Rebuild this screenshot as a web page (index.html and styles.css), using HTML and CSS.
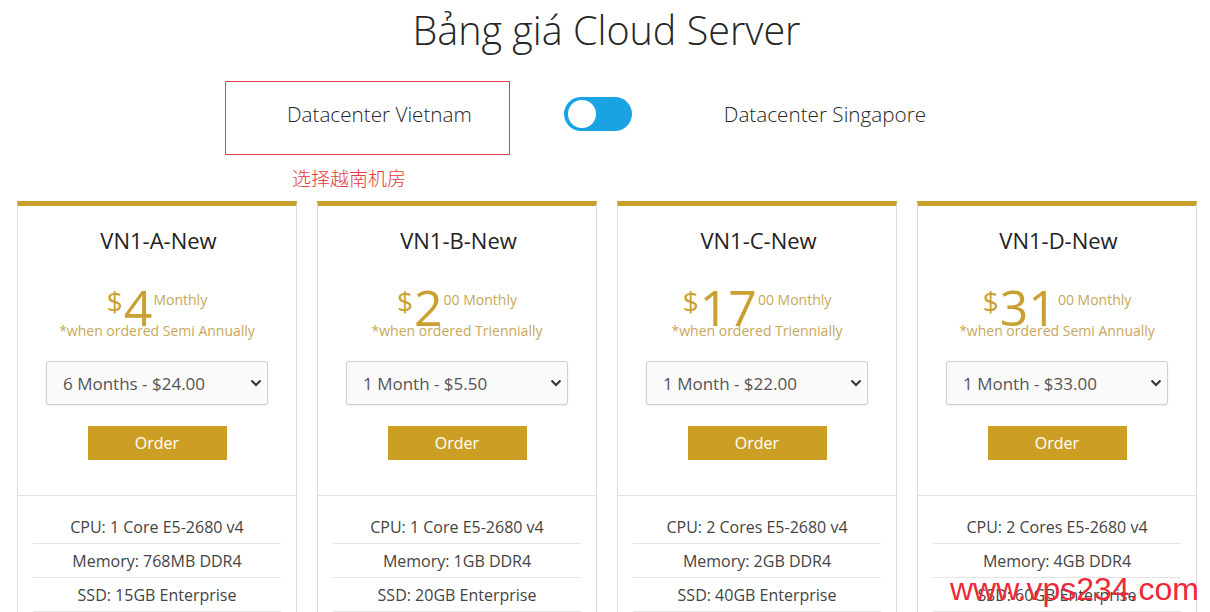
FILE: index.html
```html
<!DOCTYPE html>
<html lang="vi">
<head>
<meta charset="utf-8">
<title>Bảng giá Cloud Server</title>
<link rel="stylesheet" href="styles.css">
</head>
<body>
<div class="page">
  <h1 class="title">Bảng giá Cloud Server</h1>

  <div class="switcher">
    <div class="dc-label dc-active">
      <span>Datacenter Vietnam</span>
      <span class="mark-box"></span>
      <span class="mark-note">选择越南机房</span>
    </div>
    <div class="toggle"><span class="knob"></span></div>
    <div class="dc-label">Datacenter Singapore</div>
  </div>

  <div class="plans">
    <div class="card">
      <div class="card-head">
        <div class="plan-name">VN1-A-New</div>
        <div class="price"><span class="cur">$</span><span class="big">4</span><span class="per">Monthly</span></div>
        <div class="cycle">*when ordered Semi Annually</div>
        <div class="select-wrap">
          <select class="cycle-select"><option>6 Months - $24.00</option></select>
          <svg class="chev" width="12" height="8" viewBox="0 0 12 8"><path d="M1.5 1.5 L6 6 L10.5 1.5" fill="none" stroke="#333" stroke-width="2"/></svg>
        </div>
        <button class="order">Order</button>
      </div>
      <ul class="features">
        <li>CPU: 1 Core E5-2680 v4</li>
        <li>Memory: 768MB DDR4</li>
        <li>SSD: 15GB Enterprise</li>
      </ul>
    </div>

    <div class="card">
      <div class="card-head">
        <div class="plan-name">VN1-B-New</div>
        <div class="price"><span class="cur">$</span><span class="big">2</span><span class="per">00 Monthly</span></div>
        <div class="cycle">*when ordered Triennially</div>
        <div class="select-wrap">
          <select class="cycle-select"><option>1 Month - $5.50</option></select>
          <svg class="chev" width="12" height="8" viewBox="0 0 12 8"><path d="M1.5 1.5 L6 6 L10.5 1.5" fill="none" stroke="#333" stroke-width="2"/></svg>
        </div>
        <button class="order">Order</button>
      </div>
      <ul class="features">
        <li>CPU: 1 Core E5-2680 v4</li>
        <li>Memory: 1GB DDR4</li>
        <li>SSD: 20GB Enterprise</li>
      </ul>
    </div>

    <div class="card">
      <div class="card-head">
        <div class="plan-name">VN1-C-New</div>
        <div class="price"><span class="cur">$</span><span class="big">17</span><span class="per">00 Monthly</span></div>
        <div class="cycle">*when ordered Triennially</div>
        <div class="select-wrap">
          <select class="cycle-select"><option>1 Month - $22.00</option></select>
          <svg class="chev" width="12" height="8" viewBox="0 0 12 8"><path d="M1.5 1.5 L6 6 L10.5 1.5" fill="none" stroke="#333" stroke-width="2"/></svg>
        </div>
        <button class="order">Order</button>
      </div>
      <ul class="features">
        <li>CPU: 2 Cores E5-2680 v4</li>
        <li>Memory: 2GB DDR4</li>
        <li>SSD: 40GB Enterprise</li>
      </ul>
    </div>

    <div class="card">
      <div class="card-head">
        <div class="plan-name">VN1-D-New</div>
        <div class="price"><span class="cur">$</span><span class="big">31</span><span class="per">00 Monthly</span></div>
        <div class="cycle">*when ordered Semi Annually</div>
        <div class="select-wrap">
          <select class="cycle-select"><option>1 Month - $33.00</option></select>
          <svg class="chev" width="12" height="8" viewBox="0 0 12 8"><path d="M1.5 1.5 L6 6 L10.5 1.5" fill="none" stroke="#333" stroke-width="2"/></svg>
        </div>
        <button class="order">Order</button>
      </div>
      <ul class="features">
        <li>CPU: 2 Cores E5-2680 v4</li>
        <li>Memory: 4GB DDR4</li>
        <li>SSD: 60GB Enterprise</li>
      </ul>
    </div>
  </div>

  <div class="watermark">www.vps234.com</div>
</div>
</body>
</html>
```

FILE: styles.css
```css
* { box-sizing: border-box; }

html, body {
  margin: 0;
  padding: 0;
  background: #fff;
}

body {
  font-family: "Open Sans", "Noto Sans", sans-serif;
  color: #333;
  overflow: hidden;
}

.page {
  position: relative;
  width: 1210px;
  height: 612px;
  overflow: hidden;
}

.title {
  margin: 5px 0 0;
  padding-left: 3px;
  font-size: 39.5px;
  line-height: 50px;
  font-weight: 300;
  text-align: center;
  color: #262626;
}

.switcher {
  margin-top: 42px;
  padding-left: 3px;
  display: flex;
  justify-content: center;
  align-items: center;
  gap: 92px;
  height: 34px;
}

.dc-label {
  position: relative;
  font-size: 20.7px;
  font-weight: 300;
  line-height: 28px;
  color: #262626;
  white-space: nowrap;
}

.mark-box {
  position: absolute;
  left: -62px;
  top: -19px;
  width: 285px;
  height: 74px;
  border: 1px solid #e0454b;
}

.mark-note {
  position: absolute;
  left: 5px;
  top: 66px;
  font-family: "Noto Sans CJK SC", sans-serif;
  font-size: 19px;
  line-height: 24px;
  color: #e23b40;
  white-space: nowrap;
}

.toggle {
  width: 68px;
  height: 34px;
  border-radius: 17px;
  background: #1aa3e3;
  padding: 3px 4px;
  display: flex;
  align-items: center;
}

.knob {
  width: 28px;
  height: 28px;
  border-radius: 50%;
  background: #fff;
}

.plans {
  margin: 70px 0 0 17px;
  width: 1180px;
  display: grid;
  grid-template-columns: repeat(4, 1fr);
  gap: 20px;
}

.card {
  border: 1px solid #dcdcdc;
  border-top: 5px solid #c9a02c;
  height: 440px;
}

.card-head {
  padding: 19px 0 35px;
  border-bottom: 1px solid #e2e2e2;
  display: flex;
  flex-direction: column;
  align-items: center;
}

.plan-name {
  font-size: 22px;
  line-height: 30px;
  color: #222;
  padding-left: 3px;
}

.price {
  margin-top: 27px;
  height: 39px;
  display: flex;
  justify-content: center;
  align-items: flex-start;
  color: #c9a032;
}

.cur {
  font-size: 28px;
  line-height: 28px;
  margin-top: 5px;
  margin-right: 1px;
}

.big {
  font-size: 50px;
  line-height: 50px;
}

.per {
  font-size: 14px;
  line-height: 14px;
  margin-top: 11px;
  margin-left: 1px;
  color: #c7a75a;
}

.cycle {
  font-size: 14px;
  line-height: 20px;
  color: #c7a75a;
  position: relative;
}

.select-wrap {
  position: relative;
  margin-top: 20px;
  width: 222px;
  height: 44px;
}

.cycle-select {
  appearance: none;
  -webkit-appearance: none;
  width: 100%;
  height: 100%;
  border: 1px solid #cfcfcf;
  border-radius: 3px;
  background: #fafafa;
  box-shadow: 0 1px 2px rgba(0,0,0,0.08);
  font-family: "Open Sans", sans-serif;
  font-size: 17px;
  color: #555;
  padding: 0 0 0 16px;
  outline: none;
}

.chev {
  position: absolute;
  right: 6px;
  top: 18px;
  pointer-events: none;
}

.order {
  margin-top: 21px;
  width: 139px;
  height: 34px;
  border: 0;
  background: #cc9f24;
  color: #fff;
  font-family: "Open Sans", sans-serif;
  font-size: 16px;
  padding: 0;
}

.features {
  list-style: none;
  margin: 0;
  padding: 14px 15px 0;
}

.features li {
  height: 34px;
  line-height: 34px;
  border-bottom: 1px solid #e4e4e4;
  text-align: center;
  font-size: 16px;
  color: #444;
}

.watermark {
  position: absolute;
  left: 950px;
  top: 571px;
  font-family: "Liberation Sans", Arial, sans-serif;
  font-size: 32px;
  line-height: 36px;
  color: #ee2a3a;
  white-space: nowrap;
}
```
